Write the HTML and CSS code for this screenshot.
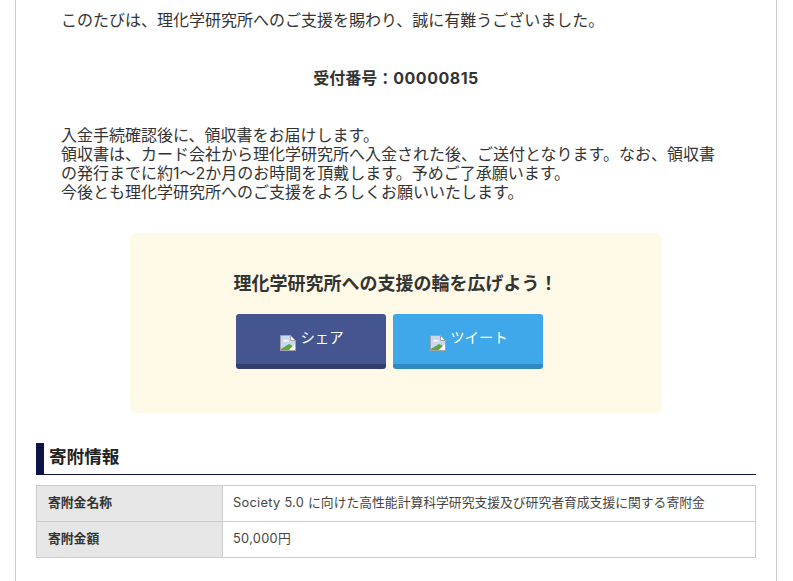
FILE: index.html
```html
<!DOCTYPE html>
<html lang="ja">
<head>
<meta charset="utf-8">
<title>寄附情報</title>
<link rel="stylesheet" href="styles.css">
</head>
<body>
<main class="page">
  <section class="message">
    <p class="thanks">このたびは、理化学研究所へのご支援を賜わり、誠に有難うございました。</p>
    <p class="receipt">受付番号：<span class="latin receipt-no">00000815</span></p>
    <p class="notes">入金手続確認後に、領収書をお届けします。<br>領収書は、カード会社から理化学研究所へ入金された後、ご送付となります。なお、領収書の発行までに約<span class="latin">1</span>～<span class="latin">2</span>か月のお時間を頂戴します。予めご了承願います。<br>今後とも理化学研究所へのご支援をよろしくお願いいたします。</p>
  </section>
  <section class="share">
    <h2 class="share-title">理化学研究所への支援の輪を広げよう！</h2>
    <div class="share-buttons">
      <a class="btn btn-fb" href="#"><svg class="broken" width="16" height="16" viewBox="0 0 16 16"><path d="M.5.5h10l5 5v10H.5z" fill="#c9d7f2" stroke="#a3a3a3"/><path d="M10.500.5v5h5z" fill="#fff" stroke="#a3a3a3"/><path d="M3 6.500c1-2 3-2 4-1 1-.5 2 0 2.500 1z" fill="#fff"/><path d="M1 15v-1l8-5 4 2-4 4z" fill="#5ba83e"/><path d="M9 15l6-6v6z" fill="#fff"/></svg><span class="btn-label">シェア</span></a>
      <a class="btn btn-tw" href="#"><svg class="broken" width="16" height="16" viewBox="0 0 16 16"><path d="M.5.5h10l5 5v10H.5z" fill="#c9d7f2" stroke="#a3a3a3"/><path d="M10.500.5v5h5z" fill="#fff" stroke="#a3a3a3"/><path d="M3 6.500c1-2 3-2 4-1 1-.5 2 0 2.500 1z" fill="#fff"/><path d="M1 15v-1l8-5 4 2-4 4z" fill="#5ba83e"/><path d="M9 15l6-6v6z" fill="#fff"/></svg><span class="btn-label">ツイート</span></a>
    </div>
  </section>
  <h2 class="section-title">寄附情報</h2>
  <table class="info">
    <tr><th>寄附金名称</th><td><span class="latin">Society 5.0 </span>に向けた高性能計算科学研究支援及び研究者育成支援に関する寄附金</td></tr>
    <tr><th>寄附金額</th><td><span class="latin">50,000</span>円</td></tr>
  </table>
</main>
</body>
</html>
```
FILE: styles.css
```css
* { box-sizing: border-box; }
html, body { margin: 0; padding: 0; }
body {
  background: #fff;
  color: #333;
  font-family: "Noto Sans CJK JP", sans-serif;
  font-size: 16px;
  line-height: 19px;
  overflow: hidden;
}
.latin { font-family: "Inter", sans-serif; line-height: 1; }
.page {
  width: 762px;
  height: 581px;
  margin-left: 15px;
  padding: 0 20px;
  border-left: 1px solid #ccc;
  border-right: 1px solid #ccc;
  overflow: hidden;
}
.message { padding: 10px 30px 0 25px; }
.message p { margin: 0; }
.receipt {
  margin-top: 39px !important;
  padding-left: 5px;
  text-align: center;
  font-weight: bold;
}
.receipt-no { letter-spacing: 0.5px; }
.notes { margin-top: 38px !important; }
.share {
  width: 532px;
  height: 180px;
  margin: 32px auto 0;
  padding-top: 39px;
  background: #fff9e8;
  border-radius: 6px;
}
.share-title {
  margin: 0;
  font-size: 18px;
  line-height: 20px;
  font-weight: bold;
  text-align: center;
  padding-right: 1px;
}
.share-buttons {
  display: flex;
  gap: 7px;
  margin-top: 22px;
  padding-left: 106px;
}
.btn {
  display: flex;
  align-items: center;
  justify-content: center;
  gap: 4px;
  width: 150px;
  height: 55px;
  padding-left: 2px;
  border-radius: 3px;
  color: #fff;
  font-size: 14.4px;
  text-decoration: none;
}
.btn-fb { background: #44558f; border-bottom: 5px solid #323e6b; }
.btn-tw { background: #3ea8ea; border-bottom: 5px solid #2f8ac4; }
.broken { margin-top: 7px; }
.btn-label { margin-top: -5px; }
.section-title {
  height: 32px;
  margin: 30px 0 0;
  padding-left: 13px;
  border-bottom: 1px solid #0d1247;
  color: #222;
  font-size: 17.6px;
  line-height: 26px;
  font-weight: bold;
  position: relative;
}
.section-title::before {
  content: "";
  position: absolute;
  left: 0;
  top: 0;
  width: 8px;
  height: 31px;
  background: #0d1247;
}
.info {
  width: 720px;
  margin-top: 10px;
  border-collapse: collapse;
  font-size: 12.8px;
}
.info th, .info td {
  height: 36px;
  padding: 0 11px 5px;
  border: 1px solid #ccc;
  text-align: left;
  vertical-align: middle;
}
.info td { padding-left: 10px; color: #444; }
.info td .latin { letter-spacing: 0.3px; }
.info th { width: 186px; background: #e6e6e6; font-weight: bold; }
```
